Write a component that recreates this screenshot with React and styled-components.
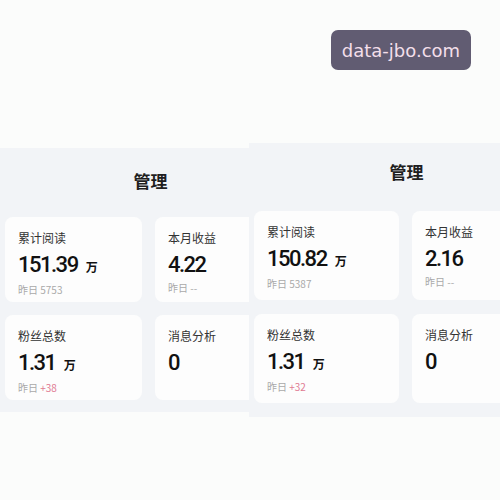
import React from 'react'
import styled, { createGlobalStyle } from 'styled-components'

const GlobalStyle = createGlobalStyle`
  body {
    margin: 0;
    background: #fbfcfb;
    font-family: Roboto, "Noto Sans CJK SC", sans-serif;
  }
`

const Page = styled.div`
  width: 500px;
  height: 500px;
  overflow: hidden;
  background: #fbfcfb;
`

const Header = styled.div`
  display: flex;
  justify-content: flex-end;
  padding: 30px 29px 0 0;
`

const Badge = styled.div`
  width: 140px;
  height: 40px;
  border-radius: 7px;
  background: #615c72;
  color: #f3dfea;
  font-family: "DejaVu Sans", sans-serif;
  font-size: 18px;
  display: flex;
  align-items: center;
  justify-content: center;
`

const Row = styled.div`
  display: flex;
  align-items: flex-start;
`

const Panel = styled.section`
  width: ${(p) => p.$width}px;
  height: ${(p) => p.$height}px;
  margin-top: ${(p) => p.$top}px;
  background: #f2f4f7;
  overflow: hidden;
  flex-shrink: 0;
`

const Title = styled.h2`
  margin: 0;
  box-sizing: border-box;
  height: ${(p) => p.$height}px;
  padding: ${(p) => p.$padTop}px 0 0 ${(p) => p.$padLeft}px;
  text-align: center;
  font-size: 17px;
  line-height: 22px;
  font-weight: 700;
  color: #1f1f1f;
  font-family: "Noto Sans CJK SC", sans-serif;
`

const Grid = styled.div`
  display: grid;
  grid-template-columns: ${(p) => p.$first}px 120px;
  grid-auto-rows: ${(p) => p.$rowH}px;
  column-gap: 13px;
  row-gap: ${(p) => p.$rowGap}px;
  padding-left: 5px;
`

const Card = styled.div`
  background: #fdfdfd;
  border-radius: 8px;
  padding: 13px 0 0 13px;
  box-sizing: border-box;
`

const Label = styled.div`
  font-family: "Noto Sans CJK SC", sans-serif;
  font-size: 12px;
  line-height: 16px;
  color: #333;
`

const Value = styled.div`
  margin-top: 6px;
  font-family: Roboto, sans-serif;
  font-size: 22px;
  line-height: 26px;
  font-weight: 500;
  letter-spacing: -1.5px;
  color: #111;
  display: flex;
  align-items: baseline;
`

const Unit = styled.span`
  margin-left: 8px;
  font-family: "Noto Sans CJK SC", sans-serif;
  font-size: 12px;
  font-weight: 700;
  letter-spacing: 0;
`

const Sub = styled.div`
  margin-top: 3px;
  font-family: "Noto Sans CJK SC", sans-serif;
  font-size: 10px;
  line-height: 14px;
  color: #a9a9a9;
`

const Up = styled.span`
  color: #e07a92;
`

const Stat = ({ label, value, unit, sub, up }) => (
  <Card>
    <Label>{label}</Label>
    <Value>
      {value}
      {unit && <Unit>{unit}</Unit>}
    </Value>
    {sub !== undefined && (
      <Sub>
        昨日 {up ? <Up>{sub}</Up> : sub}
      </Sub>
    )}
  </Card>
)

const Board = ({ width, height, top, titleH, titlePad, titleLeft, first, rowH, rowGap, data }) => (
  <Panel $width={width} $height={height} $top={top}>
    <Title $height={titleH} $padTop={titlePad} $padLeft={titleLeft}>
      管理
    </Title>
    <Grid $first={first} $rowH={rowH} $rowGap={rowGap}>
      <Stat label="累计阅读" value={data.reads} unit="万" sub={data.readsY} />
      <Stat label="本月收益" value={data.income} sub="--" />
      <Stat label="粉丝总数" value="1.31" unit="万" sub={data.fansY} up />
      <Stat label="消息分析" value="0" />
    </Grid>
  </Panel>
)

export default function App() {
  return (
    <Page>
      <GlobalStyle />
      <Header>
        <Badge>data-jbo.com</Badge>
      </Header>
      <Row>
        <Board
          width={249}
          height={264}
          top={78}
          titleH={69}
          titlePad={22}
          titleLeft={52}
          first={137}
          rowH={85}
          rowGap={13}
          data={{ reads: '151.39', readsY: '5753', income: '4.22', fansY: '+38' }}
        />
        <Board
          width={251}
          height={274}
          top={73}
          titleH={68}
          titlePad={18}
          titleLeft={64}
          first={145}
          rowH={89}
          rowGap={14}
          data={{ reads: '150.82', readsY: '5387', income: '2.16', fansY: '+32' }}
        />
      </Row>
    </Page>
  )
}
